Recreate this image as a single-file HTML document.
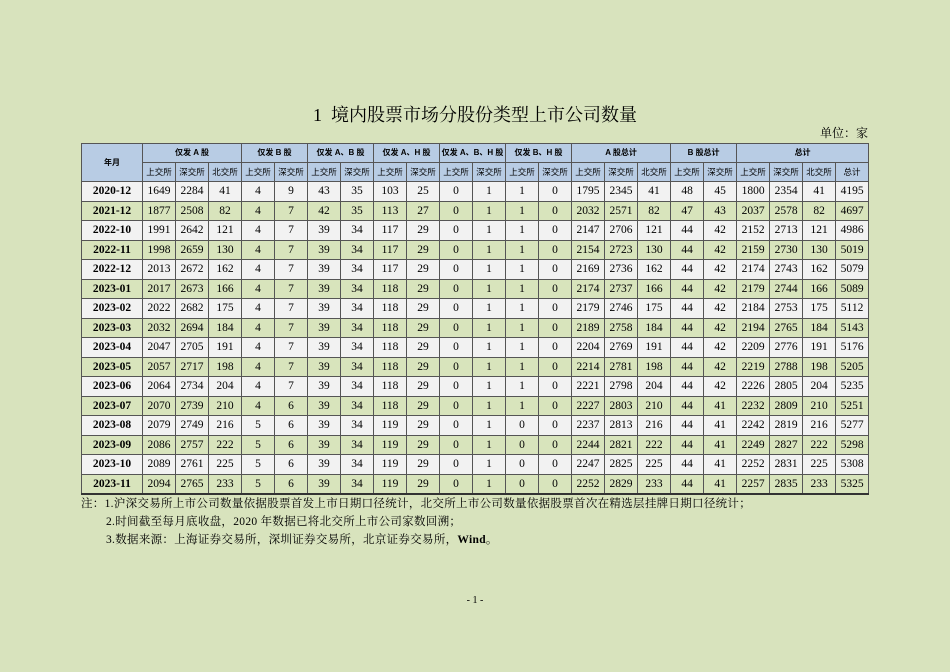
<!DOCTYPE html>
<html><head><meta charset="utf-8"><style>
body{margin:0;width:950px;height:672px;background:#d8e3bd;font-family:"Liberation Serif","Noto Serif CJK SC",serif;position:relative;overflow:hidden}
.title{position:absolute;top:101px;left:0;width:950px;text-align:center;font-size:18px;color:#000}
.unit{position:absolute;top:124px;left:820px;font-size:12px}
table{position:absolute;left:81px;top:143px;border-collapse:collapse;table-layout:fixed;width:788px}
td{border:1px solid #555;text-align:center;padding:0;font-size:11.5px;height:18.5px;line-height:18px;overflow:hidden;white-space:nowrap}
tr.h td{background:#b8cce4;font-size:8px;font-weight:bold;height:18px;font-family:"Liberation Sans","Noto Sans CJK SC",sans-serif}
tr.h2 td{font-weight:normal;font-size:8.5px}
td.d{font-weight:bold;font-size:11.5px}
tr.w td{background:#f2f2f2}
tr.g td{background:#d8e4bc}
tr.last td{border-bottom:2px solid #333}
.n{position:absolute;font-size:11.5px;left:81px;letter-spacing:0.3px}
.pg{position:absolute;top:595px;left:0;width:950px;text-align:center;font-size:10px}
</style></head><body>
<div class="title">1&nbsp; 境内股票市场分股份类型上市公司数量</div>
<div class="unit">单位：家</div>
<table>
<colgroup><col style="width:61px"><col span="22" style="width:33px"></colgroup>
<tr class="h"><td rowspan="2">年月</td><td colspan="3">仅发 A 股</td><td colspan="2">仅发 B 股</td><td colspan="2">仅发 A、B 股</td><td colspan="2">仅发 A、H 股</td><td colspan="2">仅发 A、B、H 股</td><td colspan="2">仅发 B、H 股</td><td colspan="3">A 股总计</td><td colspan="2">B 股总计</td><td colspan="4">总计</td></tr>
<tr class="h h2"><td>上交所</td><td>深交所</td><td>北交所</td><td>上交所</td><td>深交所</td><td>上交所</td><td>深交所</td><td>上交所</td><td>深交所</td><td>上交所</td><td>深交所</td><td>上交所</td><td>深交所</td><td>上交所</td><td>深交所</td><td>北交所</td><td>上交所</td><td>深交所</td><td>上交所</td><td>深交所</td><td>北交所</td><td>总计</td></tr>
<tr class="w"><td class="d">2020-12</td><td>1649</td><td>2284</td><td>41</td><td>4</td><td>9</td><td>43</td><td>35</td><td>103</td><td>25</td><td>0</td><td>1</td><td>1</td><td>0</td><td>1795</td><td>2345</td><td>41</td><td>48</td><td>45</td><td>1800</td><td>2354</td><td>41</td><td>4195</td></tr>
<tr class="g"><td class="d">2021-12</td><td>1877</td><td>2508</td><td>82</td><td>4</td><td>7</td><td>42</td><td>35</td><td>113</td><td>27</td><td>0</td><td>1</td><td>1</td><td>0</td><td>2032</td><td>2571</td><td>82</td><td>47</td><td>43</td><td>2037</td><td>2578</td><td>82</td><td>4697</td></tr>
<tr class="w"><td class="d">2022-10</td><td>1991</td><td>2642</td><td>121</td><td>4</td><td>7</td><td>39</td><td>34</td><td>117</td><td>29</td><td>0</td><td>1</td><td>1</td><td>0</td><td>2147</td><td>2706</td><td>121</td><td>44</td><td>42</td><td>2152</td><td>2713</td><td>121</td><td>4986</td></tr>
<tr class="g"><td class="d">2022-11</td><td>1998</td><td>2659</td><td>130</td><td>4</td><td>7</td><td>39</td><td>34</td><td>117</td><td>29</td><td>0</td><td>1</td><td>1</td><td>0</td><td>2154</td><td>2723</td><td>130</td><td>44</td><td>42</td><td>2159</td><td>2730</td><td>130</td><td>5019</td></tr>
<tr class="w"><td class="d">2022-12</td><td>2013</td><td>2672</td><td>162</td><td>4</td><td>7</td><td>39</td><td>34</td><td>117</td><td>29</td><td>0</td><td>1</td><td>1</td><td>0</td><td>2169</td><td>2736</td><td>162</td><td>44</td><td>42</td><td>2174</td><td>2743</td><td>162</td><td>5079</td></tr>
<tr class="g"><td class="d">2023-01</td><td>2017</td><td>2673</td><td>166</td><td>4</td><td>7</td><td>39</td><td>34</td><td>118</td><td>29</td><td>0</td><td>1</td><td>1</td><td>0</td><td>2174</td><td>2737</td><td>166</td><td>44</td><td>42</td><td>2179</td><td>2744</td><td>166</td><td>5089</td></tr>
<tr class="w"><td class="d">2023-02</td><td>2022</td><td>2682</td><td>175</td><td>4</td><td>7</td><td>39</td><td>34</td><td>118</td><td>29</td><td>0</td><td>1</td><td>1</td><td>0</td><td>2179</td><td>2746</td><td>175</td><td>44</td><td>42</td><td>2184</td><td>2753</td><td>175</td><td>5112</td></tr>
<tr class="g"><td class="d">2023-03</td><td>2032</td><td>2694</td><td>184</td><td>4</td><td>7</td><td>39</td><td>34</td><td>118</td><td>29</td><td>0</td><td>1</td><td>1</td><td>0</td><td>2189</td><td>2758</td><td>184</td><td>44</td><td>42</td><td>2194</td><td>2765</td><td>184</td><td>5143</td></tr>
<tr class="w"><td class="d">2023-04</td><td>2047</td><td>2705</td><td>191</td><td>4</td><td>7</td><td>39</td><td>34</td><td>118</td><td>29</td><td>0</td><td>1</td><td>1</td><td>0</td><td>2204</td><td>2769</td><td>191</td><td>44</td><td>42</td><td>2209</td><td>2776</td><td>191</td><td>5176</td></tr>
<tr class="g"><td class="d">2023-05</td><td>2057</td><td>2717</td><td>198</td><td>4</td><td>7</td><td>39</td><td>34</td><td>118</td><td>29</td><td>0</td><td>1</td><td>1</td><td>0</td><td>2214</td><td>2781</td><td>198</td><td>44</td><td>42</td><td>2219</td><td>2788</td><td>198</td><td>5205</td></tr>
<tr class="w"><td class="d">2023-06</td><td>2064</td><td>2734</td><td>204</td><td>4</td><td>7</td><td>39</td><td>34</td><td>118</td><td>29</td><td>0</td><td>1</td><td>1</td><td>0</td><td>2221</td><td>2798</td><td>204</td><td>44</td><td>42</td><td>2226</td><td>2805</td><td>204</td><td>5235</td></tr>
<tr class="g"><td class="d">2023-07</td><td>2070</td><td>2739</td><td>210</td><td>4</td><td>6</td><td>39</td><td>34</td><td>118</td><td>29</td><td>0</td><td>1</td><td>1</td><td>0</td><td>2227</td><td>2803</td><td>210</td><td>44</td><td>41</td><td>2232</td><td>2809</td><td>210</td><td>5251</td></tr>
<tr class="w"><td class="d">2023-08</td><td>2079</td><td>2749</td><td>216</td><td>5</td><td>6</td><td>39</td><td>34</td><td>119</td><td>29</td><td>0</td><td>1</td><td>0</td><td>0</td><td>2237</td><td>2813</td><td>216</td><td>44</td><td>41</td><td>2242</td><td>2819</td><td>216</td><td>5277</td></tr>
<tr class="g"><td class="d">2023-09</td><td>2086</td><td>2757</td><td>222</td><td>5</td><td>6</td><td>39</td><td>34</td><td>119</td><td>29</td><td>0</td><td>1</td><td>0</td><td>0</td><td>2244</td><td>2821</td><td>222</td><td>44</td><td>41</td><td>2249</td><td>2827</td><td>222</td><td>5298</td></tr>
<tr class="w"><td class="d">2023-10</td><td>2089</td><td>2761</td><td>225</td><td>5</td><td>6</td><td>39</td><td>34</td><td>119</td><td>29</td><td>0</td><td>1</td><td>0</td><td>0</td><td>2247</td><td>2825</td><td>225</td><td>44</td><td>41</td><td>2252</td><td>2831</td><td>225</td><td>5308</td></tr>
<tr class="g last"><td class="d">2023-11</td><td>2094</td><td>2765</td><td>233</td><td>5</td><td>6</td><td>39</td><td>34</td><td>119</td><td>29</td><td>0</td><td>1</td><td>0</td><td>0</td><td>2252</td><td>2829</td><td>233</td><td>44</td><td>41</td><td>2257</td><td>2835</td><td>233</td><td>5325</td></tr>
</table>
<div class="n" style="top:495px">注：1.沪深交易所上市公司数量依据股票首发上市日期口径统计，北交所上市公司数量依据股票首次在精选层挂牌日期口径统计；</div>
<div class="n" style="top:513px;left:106px">2.时间截至每月底收盘，2020 年数据已将北交所上市公司家数回溯；</div>
<div class="n" style="top:531px;left:106px">3.数据来源：上海证券交易所，深圳证券交易所，北京证券交易所，<b>Wind</b>。</div>
<div class="pg">- 1 -</div>
</body></html>
